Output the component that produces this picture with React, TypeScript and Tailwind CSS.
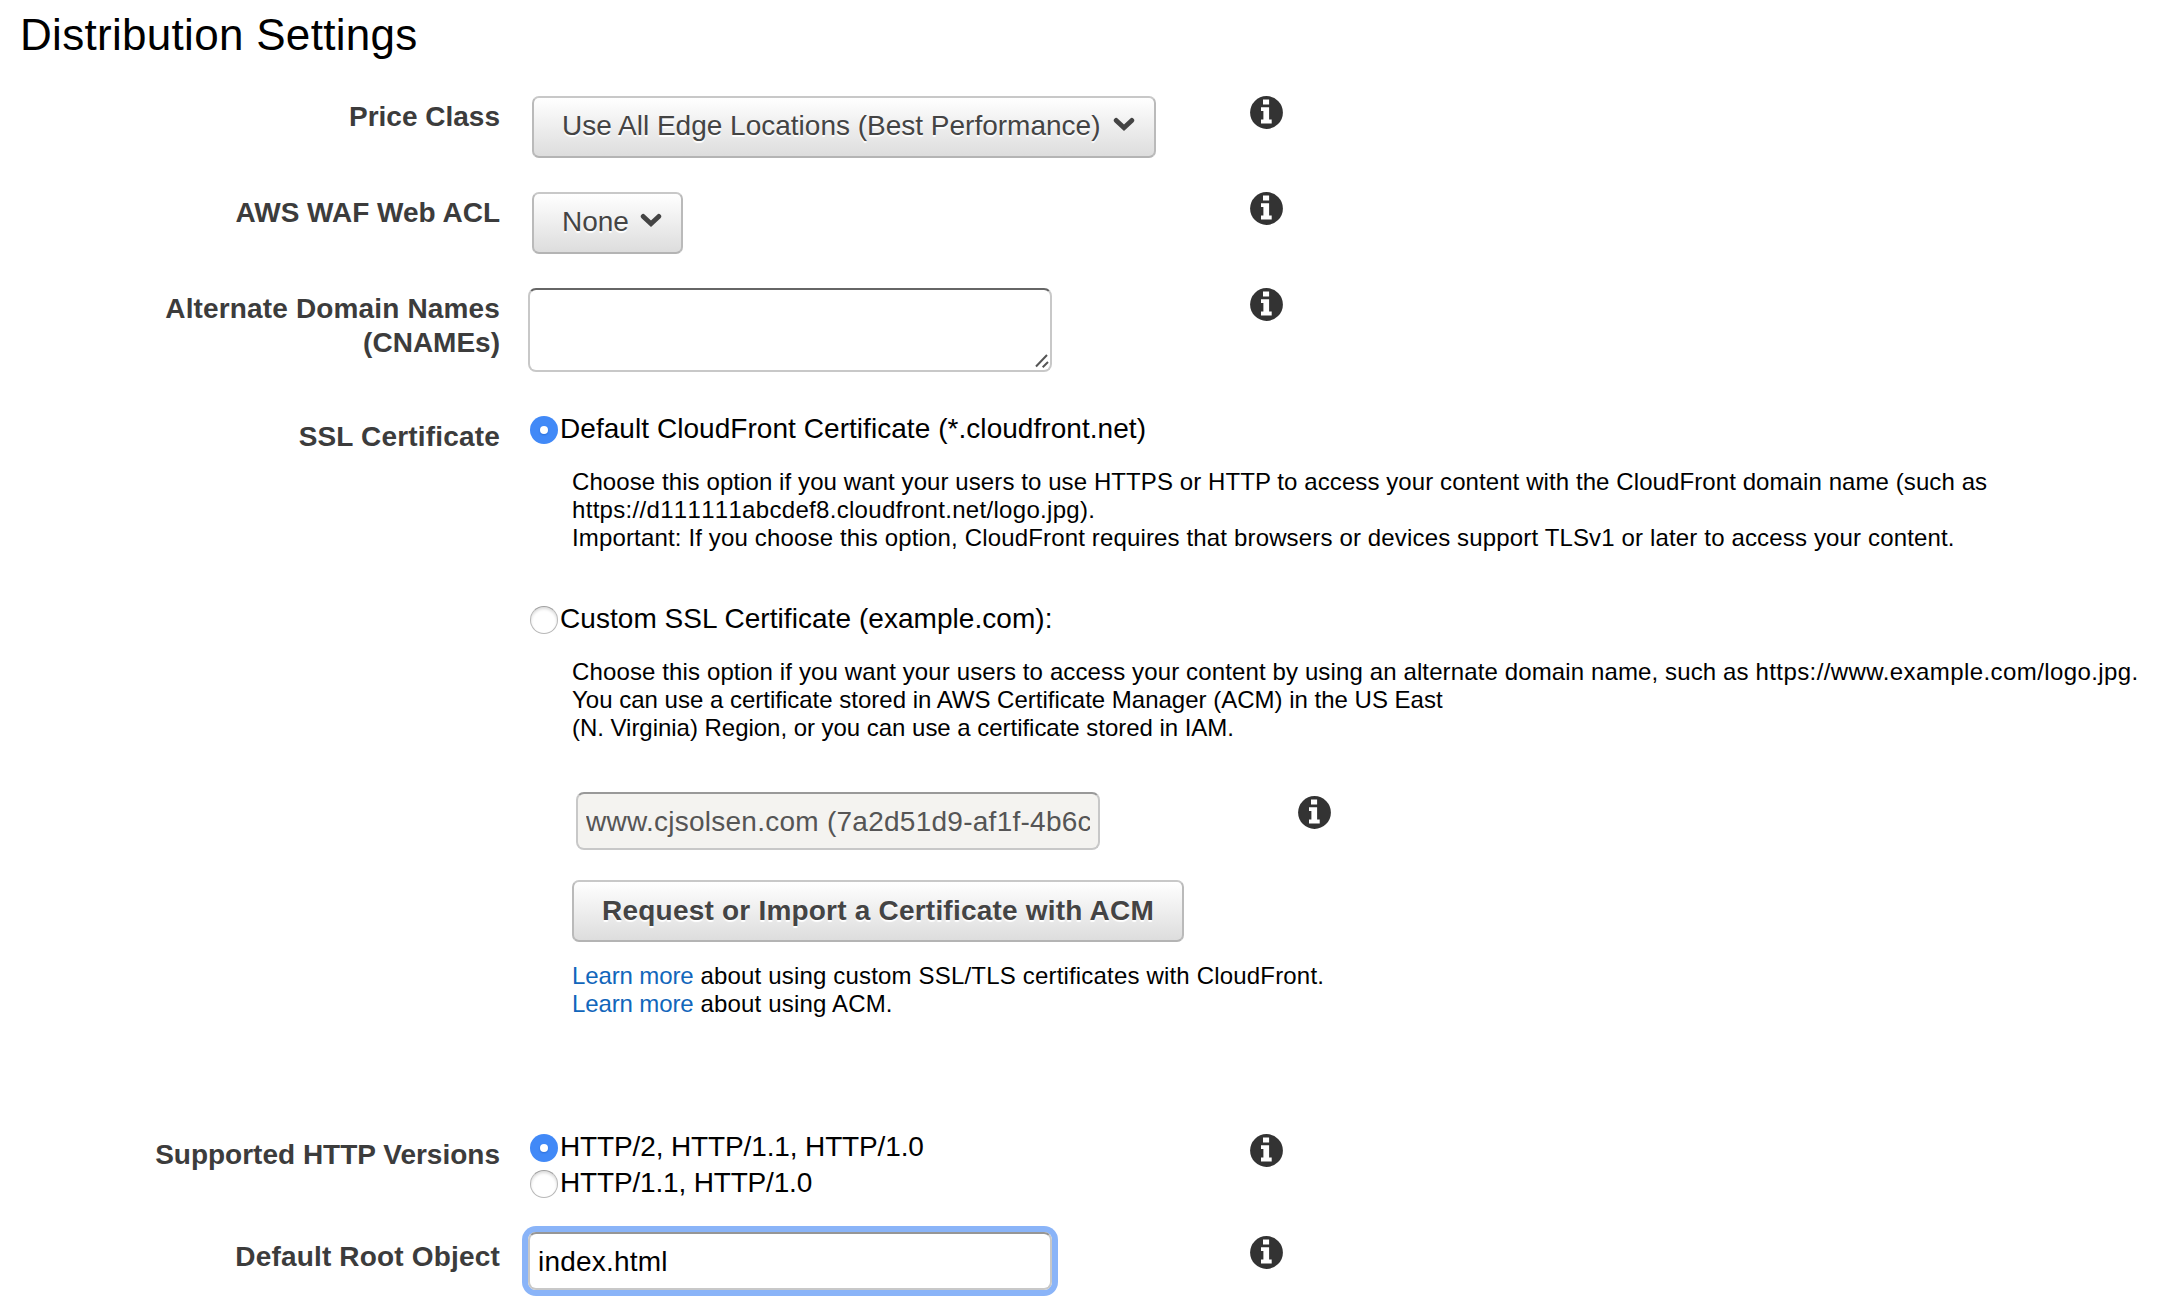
import type { ReactNode } from "react";

function InfoIcon() {
  return (
    <svg width="33" height="33" viewBox="0 0 33 33" className="block shrink-0" aria-label="Info">
      <circle cx="16.5" cy="16.5" r="16.4" fill="#333333" />
      <path d="M13 3.6h6.1v5H13zM11 11.2h8.1v12.4h2.6v4H11v-4h2.4v-8.6H11z" fill="#fff" />
    </svg>
  );
}

function Chevron() {
  return (
    <svg width="22" height="15" viewBox="0 0 22 15" className="-mt-1 block shrink-0">
      <path
        d="M3.2 3.4 11 10.8 18.8 3.4"
        fill="none"
        stroke="#444444"
        strokeWidth="4.8"
        strokeLinecap="round"
      />
    </svg>
  );
}

function Radio({ checked = false }: { checked?: boolean }) {
  return checked ? (
    <span className="flex size-7 shrink-0 items-center justify-center rounded-full bg-[#4189f7]">
      <span className="size-2 rounded-full bg-white shadow-[0_1px_2px_#2b6fd8]" />
    </span>
  ) : (
    <span className="size-7 shrink-0 rounded-full border border-[#b8b8b8] border-t-[#a0a0a0] bg-white shadow-[inset_0_2px_3px_#dcdcdc]" />
  );
}

function Option({ checked, children, className }: { checked?: boolean; children: string; className?: string }) {
  return (
    <label className={"flex h-7 items-start gap-0.5 whitespace-nowrap pl-0.5 text-[28px] leading-8 text-black " + (className ?? "")}>
      <Radio checked={checked} />
      <span className="-mt-[3px]">{children}</span>
    </label>
  );
}

function Row({ label, height, info, children }: { label: ReactNode; height: string; info?: boolean; children: ReactNode }) {
  return (
    <div className={"flex items-start " + height}>
      <div className="w-[500px] shrink-0 pt-1 text-right text-[28px] leading-[34px] font-bold text-[#3c3c3c]">{label}</div>
      <div className={"ml-7 shrink-0 " + (info ? "w-[722px]" : "w-[1630px]")}>{children}</div>
      {info && <InfoIcon />}
    </div>
  );
}

const button =
  "flex h-[62px] items-center rounded-[7px] border-2 border-x-[#bababa] border-t-[#c8c8c8] border-b-[#b4b4b4] bg-gradient-to-b from-white to-[#dddddd] text-[28px] text-[#444444] [text-shadow:0_2px_1px_#fff] whitespace-nowrap";

export default function App() {
  return (
    <main className="h-[1312px] w-[2158px] overflow-hidden bg-white font-['Liberation_Sans',Arial,sans-serif] text-black">
      <h1 className="h-24 pt-[9px] pl-5 text-[44px] leading-[52px] tracking-[0.3px]">Distribution Settings</h1>

      <Row label="Price Class" height="h-24" info>
        <button className={button + " ml-1 w-[624px] justify-between pr-[19px] pb-0.5 pl-7"}>
          <span>Use All Edge Locations (Best Performance)</span>
          <Chevron />
        </button>
      </Row>
      <Row label="AWS WAF Web ACL" height="h-24" info>
        <button className={button + " ml-1 w-[151px] justify-between pr-[19px] pb-0.5 pl-7"}>
          <span>None</span>
          <Chevron />
        </button>
      </Row>
      <Row
        label={
          <>
            <span className="tracking-[0.15px]">Alternate Domain Names</span>
            <br />
            (CNAMEs)
          </>
        }
        height="h-32"
        info
      >
        <div className="flex h-[84px] w-[524px] items-end justify-end rounded-lg border-2 border-[#c8c8c8] border-t-[#666666]">
          <svg width="18" height="18" viewBox="0 0 18 18">
            <path d="M4 14.5 15 3M10.7 15.2 16 10" stroke="#555555" strokeWidth="2" />
          </svg>
        </div>
      </Row>

      <Row label={<span className="tracking-[0.18px]">SSL Certificate</span>} height="h-[718px]">
        <Option checked className="tracking-[0.05px]">
          Default CloudFront Certificate (*.cloudfront.net)
        </Option>
        <p className="mt-6 ml-11 text-[24px] leading-7 whitespace-nowrap">
          <span className="tracking-[0.087px]">
            Choose this option if you want your users to use HTTPS or HTTP to access your content with the CloudFront domain name (such as
          </span>
          <br />
          <span className="tracking-[0.31px] [font-kerning:none]">https://d111111abcdef8.cloudfront.net/logo.jpg).</span>
          <br />
          <span className="tracking-[0.153px]">
            Important: If you choose this option, CloudFront requires that browsers or devices support TLSv1 or later to access your content.
          </span>
        </p>
        <Option className="mt-[54px] tracking-[0.05px]">Custom SSL Certificate (example.com):</Option>
        <p className="mt-6 ml-11 text-[24px] leading-7 whitespace-nowrap">
          <span className="tracking-[0.125px]">
            Choose this option if you want your users to access your content by using an alternate domain name, such as{" "}
          </span>
          <span className="tracking-[0.415px]">https://www.example.com/logo.jpg.</span>
          <br />
          You can use a certificate stored in AWS Certificate Manager (ACM) in the US East
          <br />
          <span className="tracking-[-0.03px]">(N. Virginia) Region, or you can use a certificate stored in IAM.</span>
        </p>
        <div className="mt-[50px] ml-12 flex items-start">
          <div className="h-[58px] w-[524px] rounded-lg border-2 border-[#c8c8c8] border-t-[#999999] bg-[#f4f3f0] px-2 text-[28px] leading-[55px] tracking-[0.26px] text-[#555555]">
            <div className="overflow-hidden whitespace-nowrap">www.cjsolsen.com (7a2d51d9-af1f-4b6c</div>
          </div>
          <div className="mt-1 ml-[198px]">
            <InfoIcon />
          </div>
        </div>
        <button className={button + " mt-[30px] ml-11 w-[612px] justify-center font-bold tracking-[0.21px]"}>
          Request or Import a Certificate with ACM
        </button>
        <p className="mt-5 ml-11 text-[24px] leading-7 tracking-[0.18px] whitespace-nowrap">
          <a className="tracking-[-0.12px] text-[#1166bb]">Learn more</a> about using custom SSL/TLS certificates with CloudFront.
          <br />
          <a className="tracking-[-0.12px] text-[#1166bb]">Learn more</a> about using ACM.
        </p>
      </Row>

      <Row label="Supported HTTP Versions" height="h-[102px]" info>
        <Option checked className="tracking-[-0.13px]">
          HTTP/2, HTTP/1.1, HTTP/1.0
        </Option>
        <Option className="mt-2 tracking-[-0.17px]">HTTP/1.1, HTTP/1.0</Option>
      </Row>
      <Row label={<span className="tracking-[0.18px]">Default Root Object</span>} height="h-[70px]" info>
        <div className="-mt-1 h-[58px] w-[524px] rounded-lg border-2 border-[#c8c8c8] border-t-[#969696] px-2 text-[28px] leading-[55px] tracking-[0.2px] ring-6 ring-[#8ab4f8]">
          index.html
        </div>
      </Row>
    </main>
  );
}
